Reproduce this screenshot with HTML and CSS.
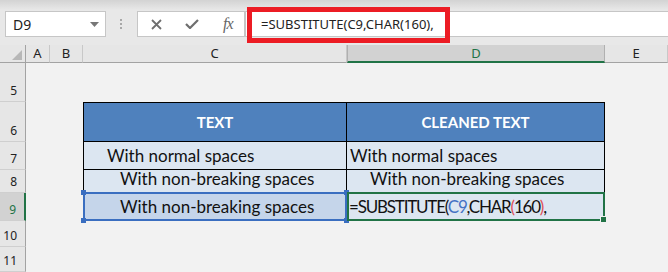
FILE: index.html
```html
<!DOCTYPE html>
<html lang="en">
<head>
    <meta charset="UTF-8">
    <meta name="viewport" content="width=device-width, initial-scale=1.0">
    <title>SUBSTITUTE CHAR(160)</title>
    <link rel="stylesheet" href="styles.css">
</head>
<body>
    <div class="toolbar">
        <div class="namebox">
            <span>D9</span>
            <svg class="caret" width="9" height="5" viewBox="0 0 9 5"><path d="M0 0h9L4.5 5z" fill="#777"/></svg>
        </div>
        <div class="grip"><i></i><i></i><i></i></div>
        <div class="fxbox">
            <svg class="ico-x" width="11" height="11" viewBox="0 0 11 11"><path d="M1 1l9 9M10 1l-9 9" stroke="#6e6e6e" stroke-width="1.8"/></svg>
            <svg class="ico-ok" width="14" height="10" viewBox="0 0 14 10"><path d="M1 5l4 4 8-8" stroke="#6e6e6e" stroke-width="2.2" fill="none"/></svg>
            <span class="fx">fx</span>
        </div>
        <div class="formula">=SUBSTITUTE(C9,CHAR(160),</div>
        <!-- red annotation around the formula -->
        <div class="callout"></div>
    </div>

    <div class="sheet">
        <!-- column headers -->
        <div class="ch corner"><svg width="10" height="10" viewBox="0 0 10 10"><path d="M10 0v10H0z" fill="#b7b7b7"/></svg></div>
        <div class="ch">A</div>
        <div class="ch">B</div>
        <div class="ch">C</div>
        <div class="ch active-col">D</div>
        <div class="ch">E</div>

        <!-- row 5 -->
        <div class="rh">5</div>
        <div></div><div></div><div></div><div></div><div></div>

        <!-- row 6 -->
        <div class="rh">6</div>
        <div></div><div></div>
        <div class="th first">TEXT</div>
        <div class="th">CLEANED TEXT</div>
        <div></div>

        <!-- row 7 -->
        <div class="rh">7</div>
        <div></div><div></div>
        <div class="td first pad-normal">With normal spaces</div>
        <div class="td pad-none">With normal spaces</div>
        <div></div>

        <!-- row 8 -->
        <div class="rh">8</div>
        <div></div><div></div>
        <div class="td first pad-nbsp">With non-breaking spaces</div>
        <div class="td pad-normal">With non-breaking spaces</div>
        <div></div>

        <!-- row 9 -->
        <div class="rh active-row">9</div>
        <div></div><div></div>
        <div class="td first pad-nbsp ref">
            With non-breaking spaces
            <div class="ref-box">
                <i class="h tl"></i><i class="h tr"></i><i class="h bl"></i><i class="h br"></i>
            </div>
        </div>
        <div class="td pad-edit editing">
            <span>=SUBSTITUTE(<b class="r1">C9</b>,CHAR<b class="r2">(</b>160<b class="r2">)</b>,</span>
            <div class="edit-box"><i class="fill"></i></div>
        </div>
        <div></div>

        <!-- row 10 -->
        <div class="rh">10</div>
        <div></div><div></div><div></div><div></div><div></div>

        <!-- row 11 -->
        <div class="rh">11</div>
        <div></div><div></div><div></div><div></div><div></div>
    </div>
</body>
</html>
```

FILE: styles.css
```css
body {
    margin: 0;
    width: 668px;
    height: 272px;
    overflow: hidden;
    background-color: #f2f2f2;
    font-family: "Noto Sans", sans-serif;
    color: #222;
}

.toolbar {
    position: relative;
    height: 45px;
    box-sizing: border-box;
    padding-top: 11px;
    display: flex;
    align-items: flex-start;
    background: linear-gradient(#d3d3d3, #e8e8e8 10px, #e8e8e8);
}

.namebox {
    margin-left: 5px;
    width: 101px;
    height: 26px;
    box-sizing: border-box;
    border: 1px solid #c6c6c6;
    background-color: #fff;
    display: flex;
    align-items: center;
    justify-content: space-between;
    padding: 0 6px 0 7px;
    font-size: 14px;
}

.grip {
    margin-left: 14px;
    margin-top: 8px;
    display: flex;
    flex-direction: column;
    gap: 2px;
}
.grip i {
    display: block;
    width: 2px;
    height: 2px;
    background-color: #a8a8a8;
}

.fxbox {
    margin-left: 15px;
    width: 108px;
    height: 26px;
    box-sizing: border-box;
    border: 1px solid #c6c6c6;
    background-color: #fff;
    display: flex;
    align-items: center;
    padding-left: 13px;
}
.ico-ok {
    margin-left: 23px;
}
.fx {
    margin-left: 24px;
    font-family: "Liberation Serif", serif;
    font-style: italic;
    font-size: 16px;
    color: #666;
    letter-spacing: -1px;
}

.formula {
    flex: 1;
    height: 26px;
    box-sizing: border-box;
    border: 1px solid #c6c6c6;
    border-right: none;
    background-color: #fff;
    padding-left: 15px;
    font-size: 13px;
    line-height: 24px;
}

.callout {
    position: absolute;
    left: 247px;
    top: 7px;
    width: 203px;
    height: 36px;
    box-sizing: border-box;
    border: 5px solid #ec1c24;
}

.sheet {
    display: grid;
    grid-template-columns: 26px 24px 33px 264px 258px 1fr;
    grid-template-rows: 18px 39px 40px 28px 23px 28px 26px 1fr;
    height: 227px;
}

.ch {
    background-color: #e6e6e6;
    border-bottom: 1px solid #a3a3a3;
    border-right: 1px solid #c8c8c8;
    font-size: 13px;
    line-height: 17px;
    text-align: center;
    color: #222;
}
.ch.corner {
    border-right-color: #a3a3a3;
    display: flex;
    align-items: flex-end;
    justify-content: flex-end;
    padding: 0 3px 2px 0;
}
.ch.active-col {
    background-color: #d2d2d2;
    border-left: 1px solid #b0b0b0;
    border-right-color: #b0b0b0;
    border-bottom: 2px solid #217346;
    color: #217346;
}

.rh {
    background-color: #e6e6e6;
    border-right: 1px solid #a3a3a3;
    border-bottom: 1px solid #cfcfcf;
    font-size: 12px;
    display: flex;
    align-items: flex-end;
    justify-content: flex-end;
    padding: 0 8px 2px 0;
    color: #222;
}
.rh.active-row {
    background-color: #d2d2d2;
    border-right: 2px solid #217346;
    color: #217346;
}

.th, .td {
    box-sizing: border-box;
    border-right: 1px solid #000;
    border-bottom: 1px solid #000;
    font-family: Lato, sans-serif;
    display: flex;
    align-items: flex-end;
}
.first {
    border-left: 1px solid #000;
}

.th {
    border-top: 1px solid #000;
    background-color: #4f81bd;
    color: #fff;
    font-weight: bold;
    font-size: 15px;
    justify-content: center;
    padding-bottom: 10px;
}

.td {
    background-color: #dce6f1;
    color: #111;
    font-size: 17px;
    padding-bottom: 3px;
    white-space: nowrap;
}

.pad-none { padding-left: 3px; }
.pad-normal { padding-left: 23px; }
.pad-nbsp { padding-left: 36px; }
.pad-edit { padding-left: 2px; }

.ref, .editing {
    position: relative;
}
.ref {
    background-color: #c5d5ea;
}
.editing span {
    letter-spacing: -1.2px;
}

.ref-box, .edit-box {
    position: absolute;
    left: -1px;
    top: -1px;
    right: -1px;
    bottom: -1px;
    border: 2px solid #3a6ec0;
}
.edit-box {
    left: 0;
    border-color: #217346;
}

.h {
    position: absolute;
    width: 5px;
    height: 5px;
    background-color: #3a6ec0;
}
.h.tl { left: -4px; top: -4px; }
.h.tr { right: -4px; top: -4px; }
.h.bl { left: -4px; bottom: -4px; }
.h.br { right: -4px; bottom: -4px; }

.fill {
    position: absolute;
    right: -4px;
    bottom: -4px;
    width: 5px;
    height: 5px;
    background-color: #217346;
    border: 1px solid #f2f2f2;
}

.editing b {
    font-weight: normal;
}
.r1 { color: #4472c4; }
.r2 { color: #e0505a; }
```
